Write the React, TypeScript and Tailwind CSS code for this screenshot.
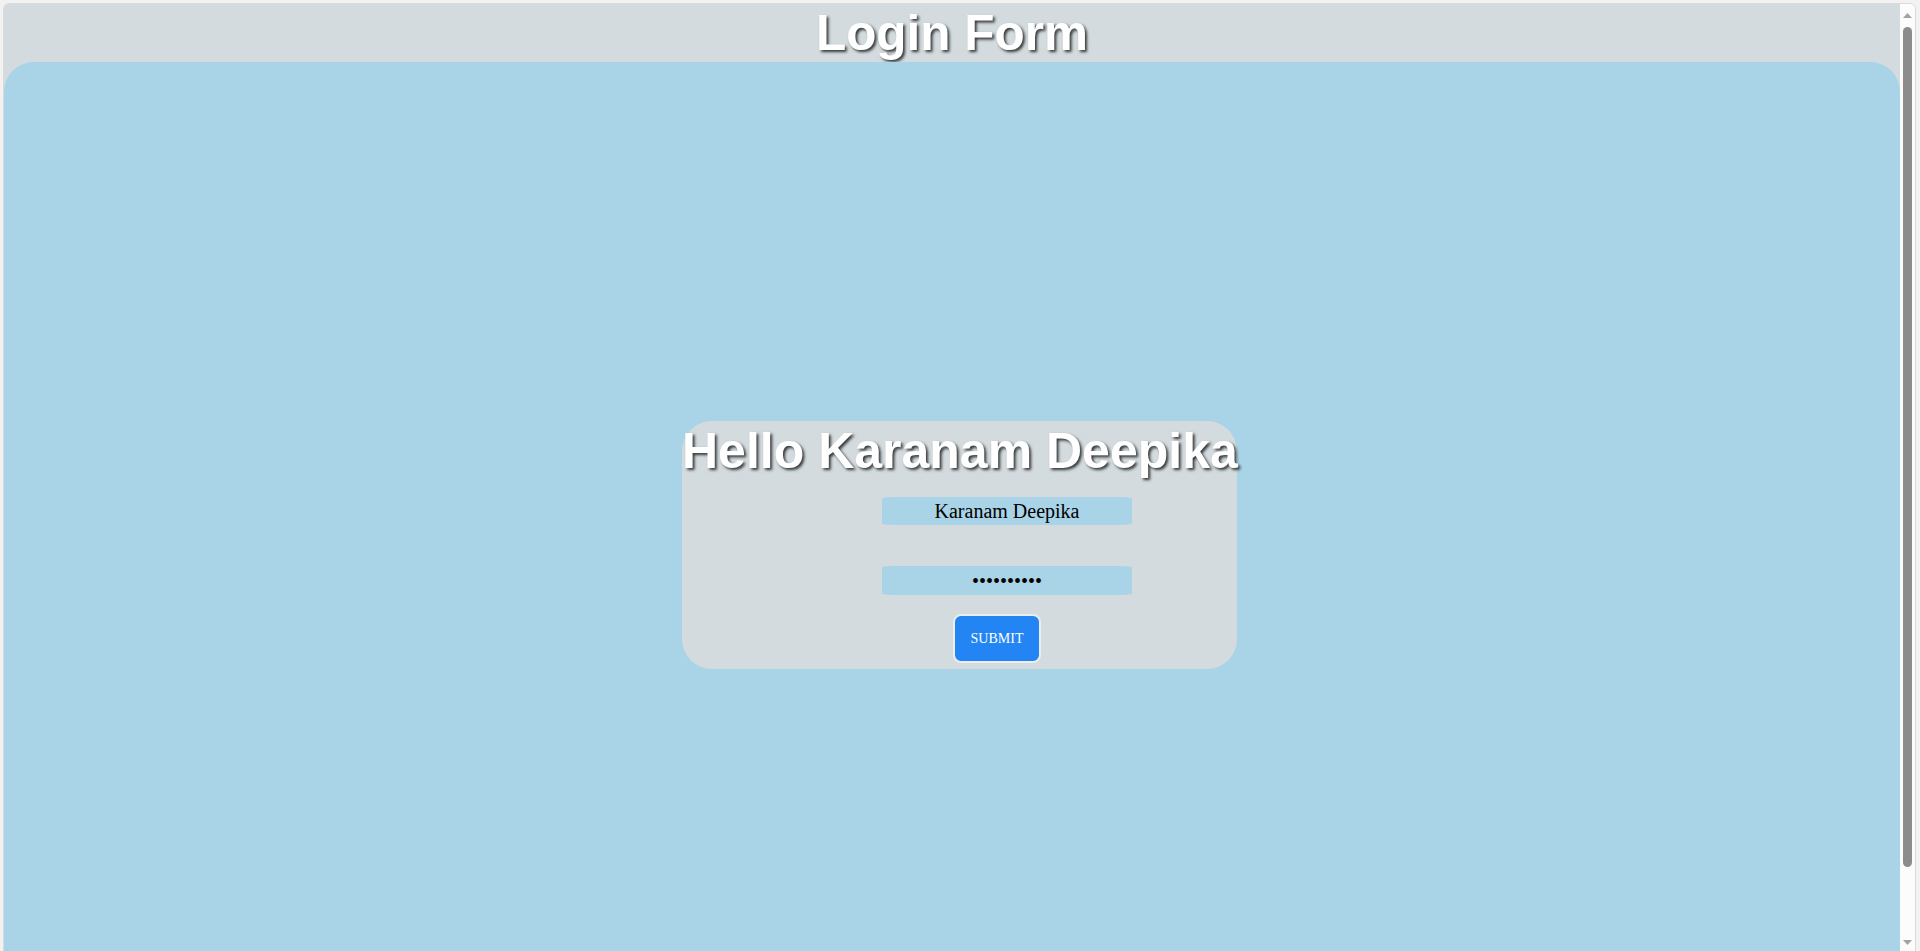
import React from 'react';

const shadow = '[text-shadow:2px_2px_3px_rgba(0,0,0,0.75)]';

function Scrollbar() {
  return (
    <div className="flex w-[15px] shrink-0 flex-col items-center bg-[#fcfcfc]">
      <svg width="9" height="5" viewBox="0 0 9 5" className="mt-[9px]">
        <polygon points="4.5,0 9,5 0,5" fill="#a3a3a3" />
      </svg>
      <div className="mt-[9px] h-[840px] w-[9px] rounded-full bg-[#8c8c8c]" />
      <svg width="9" height="5" viewBox="0 0 9 5" className="mt-[73px]">
        <polygon points="0,0 9,0 4.5,5" fill="#a3a3a3" />
      </svg>
    </div>
  );
}

export default function App() {
  return (
    <div className="h-[951px] w-full overflow-hidden bg-[#f2f2f2] pl-[3px] pr-[4px] pt-[3px]">
      <div className="flex h-full overflow-hidden rounded-t-[6px] border border-b-0 border-[#dadada]">
        {/* page */}
        <div className="flex flex-1 flex-col bg-[#d3dbde]">
          <div className="h-[58px] shrink-0 pt-[1px]">
            <h1
              className={`text-center font-['Liberation_Sans',Arial,sans-serif] text-[49.5px] font-bold leading-[56px] text-white ${shadow}`}
            >
              Login Form
            </h1>
          </div>

          <div className="flex-1 rounded-t-[30px] bg-[#a9d3e6] pl-[678px] pt-[359px]">
            <div className="flex h-[248px] w-[555px] flex-col items-start rounded-[30px] bg-[#d3dbde]">
              <h2
                className={`mt-[2px] whitespace-nowrap font-['Liberation_Sans',Arial,sans-serif] text-[50px] font-bold leading-[56px] text-white ${shadow}`}
              >
                Hello Karanam Deepika
              </h2>
              <input
                type="text"
                readOnly
                value="Karanam Deepika"
                className="ml-[200px] mt-[18px] h-[28px] w-[250px] rounded-[5%] bg-[#a9d3e6] text-center font-['Liberation_Serif','Times_New_Roman',serif] text-[20px] text-black outline-none"
              />
              <input
                type="password"
                readOnly
                value="deepika123"
                className="ml-[200px] mt-[41px] h-[29px] w-[250px] rounded-[5%] bg-[#a9d3e6] text-center font-['Liberation_Serif','Times_New_Roman',serif] text-[20px] text-black outline-none"
              />
              <button className="ml-[271px] mt-[19px] h-[49px] w-[88px] rounded-[8px] border-2 border-[#e9eef0] bg-[#2285f3] font-['Liberation_Serif','Times_New_Roman',serif] text-[14px] text-white">
                SUBMIT
              </button>
            </div>
          </div>
        </div>
        <Scrollbar />
      </div>
    </div>
  );
}
